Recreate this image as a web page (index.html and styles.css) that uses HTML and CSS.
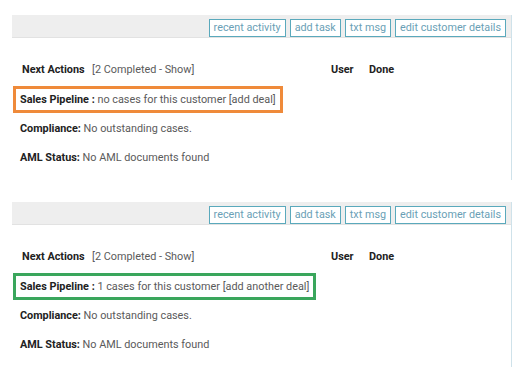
FILE: index.html
```html
<!DOCTYPE html>
<html lang="en">
<head>
    <meta charset="UTF-8">
    <title>Customer Actions</title>
    <link rel="stylesheet" href="styles.css">
</head>
<body>
    <div class="panel">
        <div class="toolbar">
            <button>recent activity</button>
            <button>add task</button>
            <button>txt msg</button>
            <button>edit customer details</button>
        </div>
        <div class="head-row">
            <span class="title">Next Actions</span>
            <span class="completed">[2 Completed - Show]</span>
            <span class="col-user">User</span>
            <span class="col-done">Done</span>
        </div>
        <div class="row pipeline orange">
            <b>Sales Pipeline :</b> no cases for this customer [add deal]
        </div>
        <div class="row"><b>Compliance:</b> No outstanding cases.</div>
        <div class="row"><b>AML Status:</b> No AML documents found</div>
    </div>

    <div class="panel second">
        <div class="toolbar">
            <button>recent activity</button>
            <button>add task</button>
            <button>txt msg</button>
            <button>edit customer details</button>
        </div>
        <div class="head-row">
            <span class="title">Next Actions</span>
            <span class="completed">[2 Completed - Show]</span>
            <span class="col-user">User</span>
            <span class="col-done">Done</span>
        </div>
        <div class="row pipeline green">
            <b>Sales Pipeline :</b> 1 cases for this customer [add another deal]
        </div>
        <div class="row"><b>Compliance:</b> No outstanding cases.</div>
        <div class="row"><b>AML Status:</b> No AML documents found</div>
    </div>
</body>
</html>
```

FILE: styles.css
```css
body {
    margin: 0;
    padding-top: 15px;
    background-color: white;
    font-family: Roboto, "Liberation Sans", sans-serif;
    font-size: 10.85px;
    color: #5a5a5a;
}
.panel {
    margin-left: 12px;
    width: 499px;
    border-right: 1px solid #cfe2ea;
    padding-bottom: 15px;
}
.panel.second {
    margin-top: 22px;
}
.toolbar {
    display: flex;
    justify-content: flex-end;
    gap: 4px;
    height: 23px;
    box-sizing: border-box;
    padding: 4px 5px 0 0;
    background-color: #eeeeee;
    border-bottom: 1px solid #e2e2e2;
}
.toolbar button {
    height: 18px;
    padding: 0 4px;
    border: 1px solid #5aa9bc;
    background-color: white;
    color: #6a9fb6;
    font-family: Roboto, "Liberation Sans", sans-serif;
    font-size: 10.8px;
    line-height: 16px;
}
.head-row {
    display: flex;
    align-items: center;
    height: 14px;
    margin-top: 24px;
    padding-left: 10px;
}
.title {
    font-weight: bold;
    color: #222;
    width: 70px;
}
.completed {
    width: 239px;
}
.col-user {
    font-weight: bold;
    color: #222;
    width: 38px;
}
.col-done {
    font-weight: bold;
    color: #222;
}
.row {
    padding-left: 8px;
    height: 14px;
    line-height: 14px;
    margin-top: 15px;
}
.row b {
    color: #222;
}
.pipeline {
    display: inline-block;
    margin-top: 10px;
    margin-left: 1px;
    padding: 4px 4px 3px 4px;
    line-height: 14px;
    height: 14px;
}
.orange {
    border: 3px solid #ef8a3a;
}
.green {
    border: 3px solid #3aa65c;
}
.pipeline + .row {
    margin-top: 9px;
}
```
